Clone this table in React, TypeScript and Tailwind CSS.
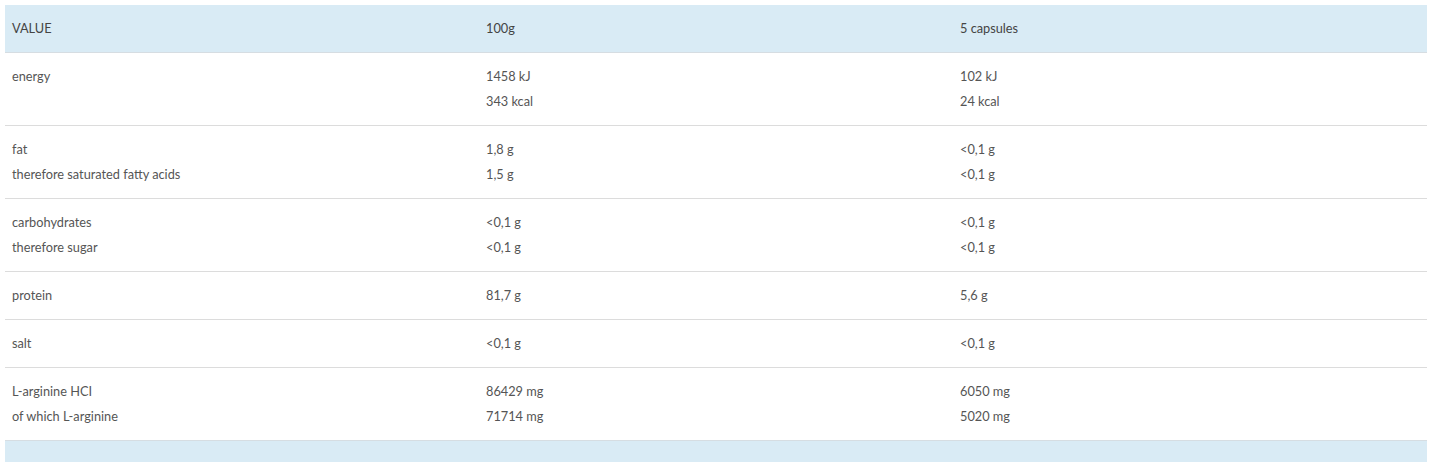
import React from "react";

type Row = { label: string[]; per100: string[]; perServing: string[] };

const rows: Row[] = [
  { label: ["energy"], per100: ["1458 kJ", "343 kcal"], perServing: ["102 kJ", "24 kcal"] },
  {
    label: ["fat", "therefore saturated fatty acids"],
    per100: ["1,8 g", "1,5 g"],
    perServing: ["<0,1 g", "<0,1 g"],
  },
  {
    label: ["carbohydrates", "therefore sugar"],
    per100: ["<0,1 g", "<0,1 g"],
    perServing: ["<0,1 g", "<0,1 g"],
  },
  { label: ["protein"], per100: ["81,7 g"], perServing: ["5,6 g"] },
  { label: ["salt"], per100: ["<0,1 g"], perServing: ["<0,1 g"] },
  {
    label: ["L-arginine HCI", "of which L-arginine"],
    per100: ["86429 mg", "71714 mg"],
    perServing: ["6050 mg", "5020 mg"],
  },
];

function Cell({ lines }: { lines: string[] }) {
  return (
    <div className="px-[7px] py-[11px]">
      {lines.map((l) => (
        <div key={l} className="leading-[25px]">
          {l}
        </div>
      ))}
    </div>
  );
}

export default function App() {
  return (
    <div className="bg-white w-[1433px] h-[469px] pt-[5px] pl-[5px] font-['Lato','Open_Sans',sans-serif] text-[12.75px] text-[#555]">
      <div className="w-[1422px]">
        <div className="grid grid-cols-3 bg-[#d9ebf5] border-b border-[#d6dde2] text-[#444]">
          <Cell lines={["VALUE"]} />
          <Cell lines={["100g"]} />
          <Cell lines={["5 capsules"]} />
        </div>
        {rows.map((r, i) => (
          <div
            key={i}
            className={
              "grid grid-cols-3 " + (i < rows.length - 1 ? "border-b border-[#dcdcdc]" : "")
            }
          >
            <Cell lines={r.label} />
            <Cell lines={r.per100} />
            <Cell lines={r.perServing} />
          </div>
        ))}
        <div className="h-[22px] bg-[#d9ebf5] border-t border-[#d6dde2]" />
      </div>
    </div>
  );
}
